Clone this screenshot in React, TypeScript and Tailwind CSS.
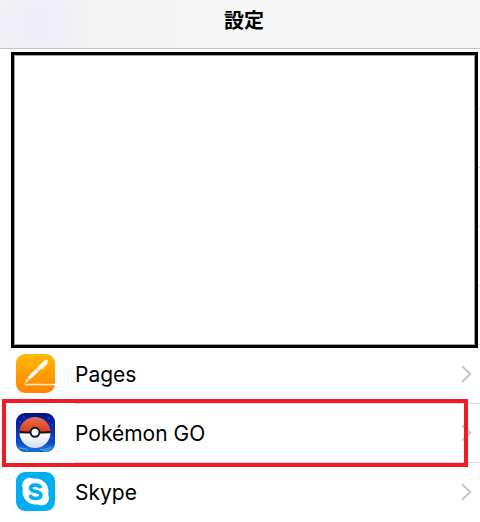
import type { ReactNode } from 'react';

function PagesIcon() {
  return (
    <svg viewBox="0 0 39 39" className="w-[39px] h-[39px] shrink-0" aria-hidden="true">
      <defs>
        <linearGradient id="pagesBg" x1="0" y1="0" x2="0" y2="1">
          <stop offset="0" stopColor="#ffb900" />
          <stop offset="1" stopColor="#ff8200" />
        </linearGradient>
      </defs>
      <rect width="39" height="39" rx="9" fill="url(#pagesBg)" />
      <path d="M8.5 30.5h30.5" stroke="#fff0d2" strokeWidth="1.6" />
      <path d="M8.7 29.3l2.3-5 2.3 2z" fill="#fff" />
      <path d="M11.6 23.3L27.5 7.3c1.500-1.500 3-1.900 3.800-1.200 0.800 0.800 0.500 2-0.500 3.400L14 25.500z" fill="#fff" />
      <path d="M20 14.500l3 2.800" stroke="#ffa51c" strokeWidth="0.7" />
      <path d="M31.200 9.500l-4.800 6" stroke="#fff" strokeWidth="0.8" strokeLinecap="round" />
    </svg>
  );
}

function PokemonIcon() {
  return (
    <svg viewBox="0 0 39 39" className="w-[39px] h-[39px] shrink-0" aria-hidden="true">
      <defs>
        <linearGradient id="pokeBg" x1="0" y1="0" x2="0" y2="1">
          <stop offset="0" stopColor="#03118f" />
          <stop offset="0.6" stopColor="#0a3cc0" />
          <stop offset="1" stopColor="#1261cf" />
        </linearGradient>
        <linearGradient id="pokeTop" x1="0" y1="0" x2="0" y2="1">
          <stop offset="0" stopColor="#f0704c" />
          <stop offset="1" stopColor="#d63a1c" />
        </linearGradient>
        <linearGradient id="pokeBottom" x1="0" y1="0" x2="0" y2="1">
          <stop offset="0" stopColor="#ffffff" />
          <stop offset="1" stopColor="#d5dcf0" />
        </linearGradient>
        <clipPath id="pokeClip">
          <rect width="39" height="39" rx="9" />
        </clipPath>
      </defs>
      <g clipPath="url(#pokeClip)">
        <rect width="39" height="39" fill="url(#pokeBg)" />
        <path d="M0 33c8-2 14 3 21 2s11-4 18-3v7H0z" fill="#1269d4" />
        <path d="M24 36.5c5 0 11-1 10-3M27 38c5 0 9-2 9-4M3 35c4 0 6 1 9 2" stroke="#60bdf0" strokeWidth="0.9" fill="none" />
        <g fill="#498be8">
          <circle cx="4" cy="9" r="0.7" />
          <circle cx="8" cy="4" r="0.6" />
          <circle cx="33" cy="5" r="0.7" />
          <circle cx="36" cy="12" r="0.6" />
          <circle cx="3" cy="27" r="0.6" />
          <circle cx="36" cy="25" r="0.7" />
        </g>
        <path d="M3.5 19.5a15.5 15.5 0 0 0 31 0z" fill="url(#pokeBottom)" />
        <path d="M3.5 19.5a15.5 15.5 0 0 1 31 0z" fill="url(#pokeTop)" />
        <path d="M3.5 18Q19 19 34.5 18v2.2Q19 20.8 3.5 20.2z" fill="#161616" />
        <circle cx="19" cy="19.3" r="4.5" fill="#fff" stroke="#161616" strokeWidth="2" />
      </g>
    </svg>
  );
}

function SkypeIcon() {
  return (
    <svg viewBox="0 0 39 39" className="w-[39px] h-[39px] shrink-0" aria-hidden="true">
      <rect width="39" height="39" rx="9" fill="#00aff0" />
      <g fill="#fff">
        <circle cx="19.5" cy="19.6" r="13" />
        <circle cx="13.7" cy="13.3" r="7.6" />
        <circle cx="25.5" cy="26" r="7.6" />
      </g>
      <path
        d="M24.700 16.200c-.6-2-2.400-3.100-5.100-3.100-3 0-5 1.100-5 3.100 0 2.200 2 2.700 5 3.300 3.400.7 5.300 1.300 5.300 3.600 0 2.200-2.100 3.400-5.200 3.400s-5.100-1.200-5.600-3.500"
        fill="none"
        stroke="#00aff0"
        strokeWidth="3.6"
      />
    </svg>
  );
}

function Chevron() {
  return (
    <svg viewBox="0 0 11 18" className="w-[11px] h-[18px] shrink-0" aria-hidden="true">
      <path d="M1.2 1.2L9.2 9l-8 7.800" fill="none" stroke="#c5c5ca" strokeWidth="2" />
    </svg>
  );
}

function Row({ icon, label, selected }: { icon: ReactNode; label: string; selected?: boolean }) {
  return (
    <li className="relative">
      <button type="button" className="w-full h-[59px] pl-4 flex items-center gap-5 text-left">
        {icon}
        <span className="flex-1 h-full pr-2 flex items-center justify-between border-t border-[#d9d9dc]">
          <span className="pt-0.5 text-[21px] leading-7 text-black">{label}</span>
          <Chevron />
        </span>
      </button>
      {selected && (
        <div className="absolute z-10 left-[2px] right-3 -top-1 -bottom-[5px] border-4 border-[#ef1b25] pointer-events-none" />
      )}
    </li>
  );
}

const coveredRows = [1, 2, 3, 4, 5];

export default function App() {
  return (
    <div className="bg-white font-['Inter','Noto_Sans_CJK_JP',sans-serif]">
      {/* Navigation bar */}
      <header className="h-[49px] pl-2 pb-2 flex items-center justify-center border-b border-[#c4c5c4] bg-[#f7f7f7] bg-[radial-gradient(circle_at_36px_24px,#eeebf7_0,#f3f3f4_60px,#f7f7f7_170px)]">
        <h1 className="text-xl leading-7 font-bold text-black font-['Noto_Sans_CJK_JP',sans-serif]">設定</h1>
      </header>

      {/* Covered part of the list */}
      <div className="relative z-10">
        <ul aria-hidden="true">
          {coveredRows.map((row) => (
            <li key={row} className="h-[59px] ml-[75px] border-t border-[#d9d9dc] first:border-t-0" />
          ))}
        </ul>
        <div className="absolute left-[11px] right-[2px] top-[3px] -bottom-1 bg-white border-3 border-black inset-ring inset-ring-[#a3a3a3]" />
      </div>

      {/* App list */}
      <ul>
        <Row icon={<PagesIcon />} label="Pages" />
        <Row icon={<PokemonIcon />} label="Pokémon GO" selected />
        <Row icon={<SkypeIcon />} label="Skype" />
      </ul>
    </div>
  );
}
